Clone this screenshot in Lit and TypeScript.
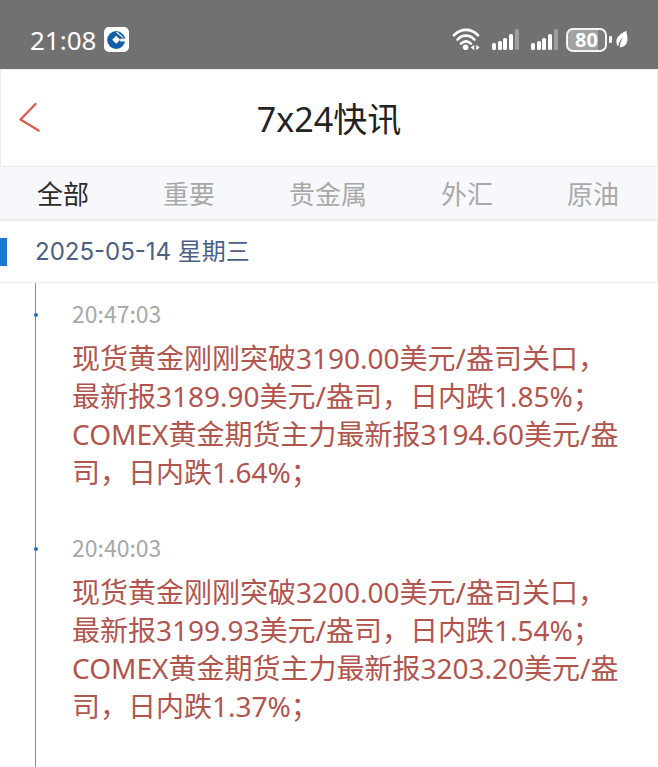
import { LitElement, html, css, svg } from "lit";
import { customElement, property, state } from "lit/decorators.js";
import { classMap } from "lit/directives/class-map.js";

interface Flash {
  time: string;
  text: string;
}

const TABS = ["全部", "重要", "贵金属", "外汇", "原油"];

const FLASHES: Flash[] = [
  {
    time: "20:47:03",
    text: "现货黄金刚刚突破3190.00美元/盎司关口，最新报3189.90美元/盎司，日内跌1.85%；COMEX黄金期货主力最新报3194.60美元/盎司，日内跌1.64%；",
  },
  {
    time: "20:40:03",
    text: "现货黄金刚刚突破3200.00美元/盎司关口，最新报3199.93美元/盎司，日内跌1.54%；COMEX黄金期货主力最新报3203.20美元/盎司，日内跌1.37%；",
  },
];

const signalBars = [
  { x: 0, top: 15 },
  { x: 6, top: 13 },
  { x: 11, top: 10 },
  { x: 17, top: 6 },
  { x: 23, top: 1 },
];

const signalIcon = () => html`<svg width="27" height="24" viewBox="0 0 27 24" aria-hidden="true">
  ${signalBars.map(
    (b, i) => svg`<rect x=${b.x} y=${b.top} width="4" height=${22 - b.top} rx="1.6"
      fill="#fff" fill-opacity=${i === 4 ? 0.32 : 1}></rect>`
  )}
</svg>`;

@customElement("status-bar")
export class StatusBar extends LitElement {
  static styles = css`
    :host {
      display: flex;
      align-items: center;
      justify-content: space-between;
      box-sizing: border-box;
      height: 69px;
      padding: 10px 30px 0;
      background: #717171;
      color: #fff;
    }
    .side {
      display: flex;
      align-items: center;
    }
    .left {
      gap: 8px;
    }
    .clock {
      font-size: 26px;
      line-height: 32px;
    }
    .net {
      display: flex;
      gap: 12px;
      margin-right: 8px;
    }
    .battery {
      box-sizing: border-box;
      width: 41px;
      height: 24px;
      border: 2px solid #f4f4f4;
      border-radius: 7px;
      background: linear-gradient(to right, #a2a2a2 80%, #7d7d7d 80%);
      font: 700 20px/20px "Noto Sans", sans-serif;
      text-align: center;
    }
    .nub {
      width: 3px;
      height: 7px;
      margin: 0 4px 0 2px;
      border-radius: 1px;
      background: #f4f4f4;
    }
    svg {
      display: block;
    }
  `;

  render() {
    return html`
      <div class="side left">
        <span class="clock">21:08</span>
        <svg width="25" height="25" viewBox="0 0 25 25" aria-hidden="true">
          <rect width="25" height="25" rx="5" fill="#fff"></rect>
          <circle cx="12.2" cy="13" r="9" fill="#155da5"></circle>
          <path d="M12.2 8.800L16.200 12.800 12.200 16.800 8.200 12.800Z" fill="#fff"></path>
          <path d="M15.500 13.200L17 11.600H24V14.400H16.800Z" fill="#fff"></path>
          <path d="M12.500 5L18.800 10.300" stroke="#fff" stroke-width="1.100"></path>
          <path d="M15 3L21.600 8.800" stroke="#fff" stroke-width="1"></path>
        </svg>
      </div>
      <div class="side">
        <div class="net">
          <svg width="28" height="24" viewBox="0 0 28 24" fill="none" stroke="#fff" stroke-linecap="round" aria-hidden="true">
            <path d="M2 7.200C8.800.200 19.200.200 26 7.200" stroke-width="2.700"></path>
            <path d="M5.500 11.600C10.500 6.400 17.500 6.400 22.500 11.600" stroke-width="2.700"></path>
            <path d="M9 15.600C12 12.600 16 12.600 19 15.600" stroke-width="2.700"></path>
            <circle cx="13.600" cy="19.300" r="2.800" fill="#fff" stroke="none"></circle>
            <path d="M18.800 19.500L22.200 16.800V22.200ZM27.600 19.500L24.200 16.800V22.200Z" fill="#fff" stroke="none"></path>
          </svg>
          ${signalIcon()} ${signalIcon()}
        </div>
        <div class="battery">80</div>
        <div class="nub"></div>
        <svg width="12" height="19" viewBox="0 0 12 19" aria-hidden="true">
          <path d="M10.500.800C5.500 3.200.300 6.500.400 11.500.400 13.800 1.200 15.400 2.200 16.400 2.600 13 4.300 10 6.900 7.200 5.300 10.600 4.200 13.500 3.700 17.200 8.600 17.500 11.600 13.500 11.500 8.500 11.400 5.500 10.300 3.500 10.500.800Z" fill="#fff"></path>
        </svg>
      </div>
    `;
  }
}

@customElement("flash-item")
export class FlashItem extends LitElement {
  @property() time = "";
  @property() text = "";

  static styles = css`
    :host {
      display: block;
      position: relative;
      padding: 14px 24px 26px 36px;
    }
    .dot {
      position: absolute;
      left: -2px;
      top: 30px;
      width: 4px;
      height: 4px;
      border-radius: 50%;
      background: #2170c4;
    }
    .time {
      display: block;
      color: #a8a8a8;
      font: 23px/32px "Noto Sans CJK SC", sans-serif;
    }
    .text {
      margin: 10px 0 0;
      color: #b1554e;
      font-size: 28px;
      line-height: 38px;
    }
  `;

  render() {
    return html`
      <span class="dot"></span>
      <time class="time">${this.time}</time>
      <p class="text">${this.text}</p>
    `;
  }
}

@customElement("app-root")
export class AppRoot extends LitElement {
  @state() private active = 0;

  static styles = css`
    :host {
      display: flex;
      flex-direction: column;
      min-height: 100vh;
      background: #fff;
      font-family: "Noto Sans", "Noto Sans CJK SC", sans-serif;
    }
    .header {
      display: grid;
      grid-template-columns: 60px 1fr 60px;
      align-items: center;
      box-sizing: border-box;
      height: 97px;
      border: 1px solid #ececec;
      border-bottom: 0;
    }
    .back {
      width: 60px;
      height: 60px;
      padding: 0 0 0 17px;
      border: 0;
      background: none;
      cursor: pointer;
    }
    .back svg {
      display: block;
    }
    .title {
      margin: 0;
      padding-top: 2px;
      color: #222;
      font-size: 34px;
      font-weight: 400;
      line-height: 48px;
      text-align: center;
    }
    .tabs {
      display: flex;
      justify-content: space-between;
      box-sizing: border-box;
      height: 55px;
      padding: 0 39px 0 37px;
      border-top: 1px solid #e8eaea;
      border-bottom: 2px solid #ececec;
      background: #f7f8fc;
    }
    .tab {
      padding: 0;
      border: 0;
      background: none;
      color: #a9a9a9;
      font: 26px/52px "Noto Sans CJK SC", sans-serif;
      cursor: pointer;
    }
    .tab.active {
      color: #2b2b2b;
    }
    .date {
      display: flex;
      align-items: center;
      gap: 28px;
      box-sizing: border-box;
      height: 62px;
      margin: 0;
      border: 1px solid #ececec;
      border-width: 0 1px 1px 0;
      color: #4a5f86;
      font: 24px/32px "Inter", "Noto Sans CJK SC", sans-serif;
    }
    .date::before {
      content: "";
      width: 7px;
      height: 28px;
      background: #1979d8;
    }
    .feed {
      flex: 1;
      margin-left: 35px;
      border-left: 1px solid #8c8c8c;
    }
  `;

  render() {
    return html`
      <status-bar></status-bar>
      <header class="header">
        <button class="back" aria-label="返回">
          <svg width="24" height="32" viewBox="0 0 24 32" fill="none" stroke="#d95f4c" stroke-width="2.400" stroke-linecap="round" stroke-linejoin="round" aria-hidden="true">
            <path d="M17.500 2L2.500 17.500 20.500 28.500"></path>
          </svg>
        </button>
        <h1 class="title">7x24快讯</h1>
      </header>
      <nav class="tabs">
        ${TABS.map(
          (name, i) => html`<button
            class=${classMap({ tab: true, active: i === this.active })}
            @click=${() => (this.active = i)}
          >${name}</button>`
        )}
      </nav>
      <h2 class="date">2025-05-14 星期三</h2>
      <main class="feed">
        ${FLASHES.map((f) => html`<flash-item .time=${f.time} .text=${f.text}></flash-item>`)}
      </main>
    `;
  }
}
